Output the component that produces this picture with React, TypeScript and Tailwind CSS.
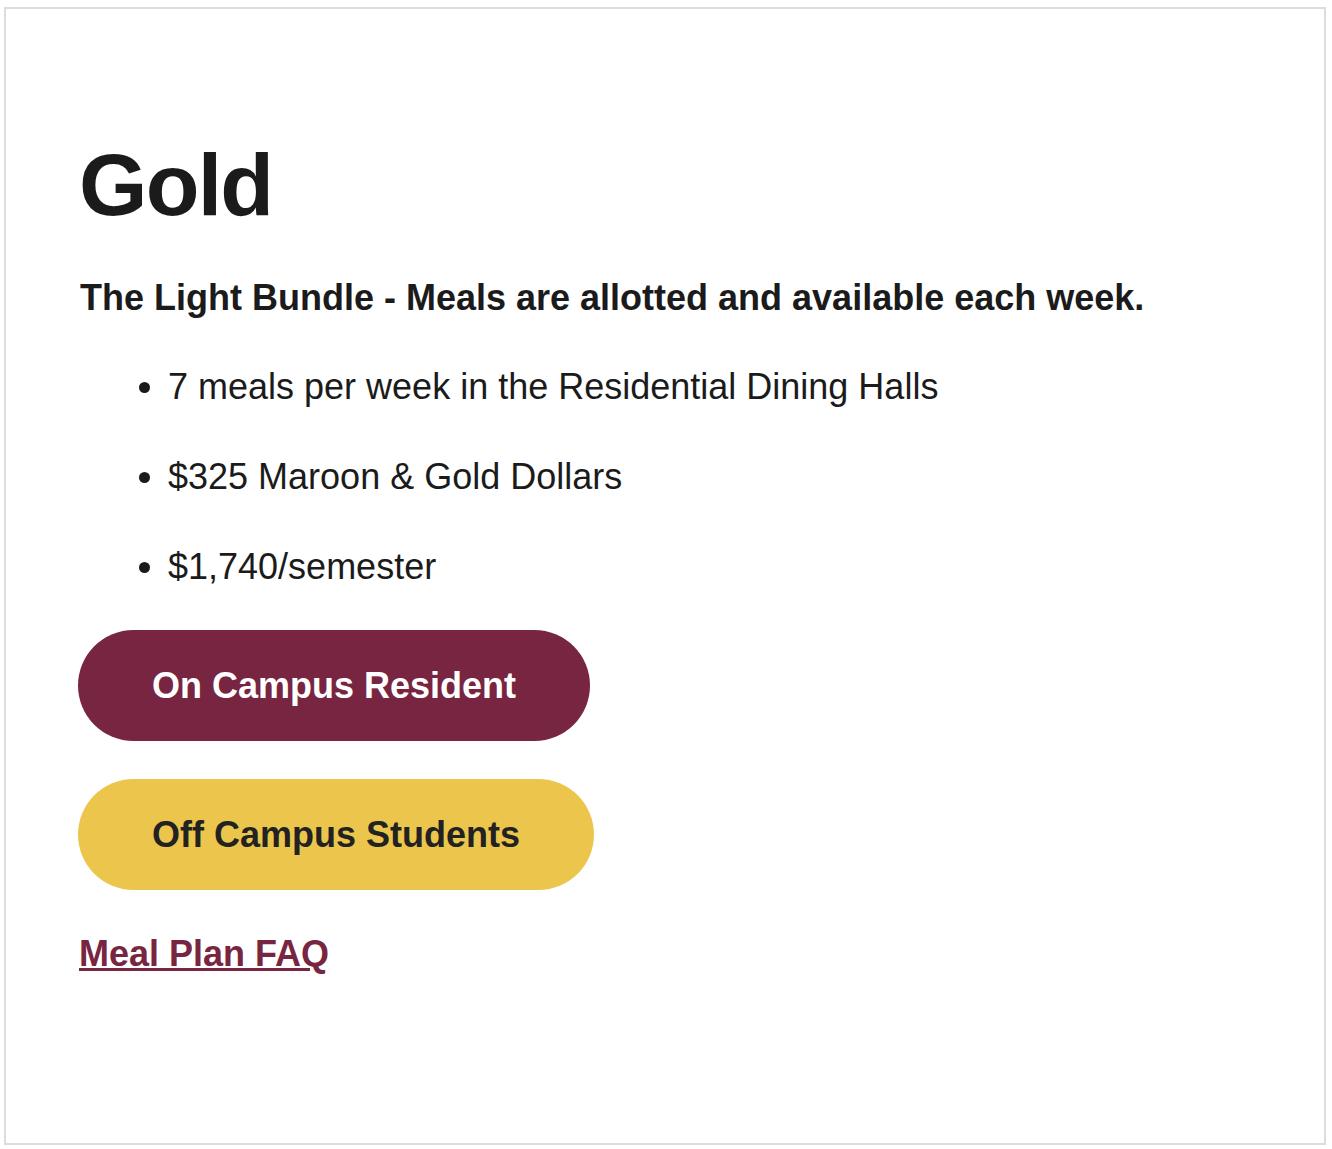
export default function App() {
  const items = [
    '7 meals per week in the Residential Dining Halls',
    '$325 Maroon & Gold Dollars',
    '$1,740/semester',
  ];

  return (
    <div className="bg-white pt-[7px] pl-[4px] pr-[6px] font-['Liberation_Sans',Arial,sans-serif] text-[#1b1b1b]">
      <div className="h-[1138px] border-2 border-[#dddddd] pt-[132px] pl-[74px]">
        {/* Plan title */}
        <h1 className="-ml-[1px] text-[88px] leading-[88px] font-bold tracking-[-0.02em]">Gold</h1>

        <p className="mt-[42px] text-[36px] leading-[54px] font-bold">
          The Light Bundle - Meals are allotted and available each week.
        </p>

        <ul className="mt-[35px] list-disc pl-[88px] flex flex-col gap-[36px]">
          {items.map((item) => (
            <li key={item} className="text-[36px] leading-[54px]">
              {item}
            </li>
          ))}
        </ul>

        {/* Buttons */}
        <div className="mt-[36px] -ml-[2px] flex flex-col items-start gap-[38px]">
          <a
            href="#"
            className="inline-block rounded-full bg-[#782541] px-[74px] py-[28px] text-[36px] leading-[55px] font-bold text-white"
          >
            On Campus Resident
          </a>
          <a
            href="#"
            className="inline-block rounded-full bg-[#ecc64c] px-[74px] py-[28px] text-[36px] leading-[55px] font-bold text-[#222222]"
          >
            Off Campus Students
          </a>
        </div>

        <a
          href="#"
          className="mt-[37px] -ml-[1px] inline-block text-[36px] leading-[54px] font-bold text-[#782541] underline"
        >
          Meal Plan FAQ
        </a>
      </div>
    </div>
  );
}
